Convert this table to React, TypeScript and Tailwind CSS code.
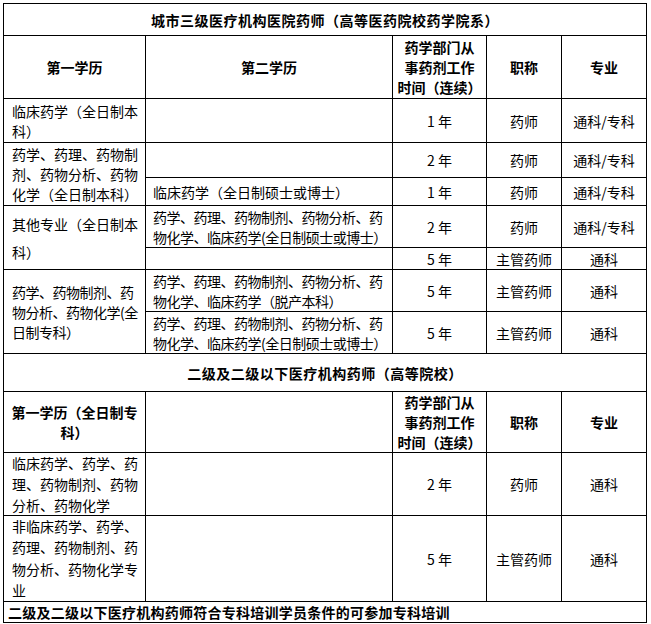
import type { ReactNode } from "react";

const font = { fontFamily: '"Noto Sans CJK SC", "Noto Sans", sans-serif' };

function Cell({
  children,
  className = "",
}: {
  children?: ReactNode;
  className?: string;
}) {
  return (
    <div className={`flex items-center bg-white text-[14px] leading-[20px] text-black ${className}`}>
      {children}
    </div>
  );
}

// centred cell for the short columns (time / title / category)
function Mid({ children, className = "" }: { children?: ReactNode; className?: string }) {
  return <Cell className={`justify-center text-center ${className}`}>{children}</Cell>;
}

function HeaderTime() {
  return (
    <Mid className="font-bold">
      <span className="whitespace-nowrap">
        药学部门从
        <br />
        事药剂工作
        <br />
        时间（连续）
      </span>
    </Mid>
  );
}

export default function App() {
  return (
    <div className="min-h-screen bg-white pl-[3px] pt-[3px]" style={font}>
      <div
        className="grid w-[644px] gap-px bg-black p-px"
        style={{
          gridTemplateColumns: "141px 246px 93px 74px 84px",
          gridTemplateRows: "31px 62px 43px 34px 27px 41px 21px 41px 41px 37px 60px 62px 85px 20px",
        }}
      >
        {/* section 1 */}
        <Mid className="col-span-5 font-bold tracking-[0.5px]">
          城市三级医疗机构医院药师（高等医药院校药学院系）
        </Mid>

        <Mid className="font-bold">第一学历</Mid>
        <Mid className="font-bold">第二学历</Mid>
        <HeaderTime />
        <Mid className="font-bold">职称</Mid>
        <Mid className="font-bold">专业</Mid>

        <Cell className="pl-2 leading-[19px]">
          <span className="whitespace-nowrap">
            临床药学（全日制本
            <br />
            科）
          </span>
        </Cell>
        <Cell />
        <Mid>1 年</Mid>
        <Mid>药师</Mid>
        <Mid>通科/专科</Mid>

        <Cell className="row-span-2 pl-2">
          <span className="whitespace-nowrap">
            药学、药理、药物制
            <br />
            剂、药物分析、药物
            <br />
            化学（全日制本科）
          </span>
        </Cell>
        <Cell />
        <Mid>2 年</Mid>
        <Mid>药师</Mid>
        <Mid>通科/专科</Mid>

        <Cell className="pl-[7px]">
          <span className="whitespace-nowrap">临床药学（全日制硕士或博士）</span>
        </Cell>
        <Mid>1 年</Mid>
        <Mid>药师</Mid>
        <Mid>通科/专科</Mid>

        <Cell className="row-span-2 pl-2 leading-[28px]">
          <span className="whitespace-nowrap">
            其他专业（全日制本
            <br />
            科）
          </span>
        </Cell>
        <Cell className="pl-[7px]">
          <span className="whitespace-nowrap tracking-[-0.5px]">
            药学、药理、药物制剂、药物分析、药
            <br />
            物化学、临床药学(全日制硕士或博士）
          </span>
        </Cell>
        <Mid>2 年</Mid>
        <Mid>药师</Mid>
        <Mid>通科/专科</Mid>

        <Cell />
        <Mid>5 年</Mid>
        <Mid>主管药师</Mid>
        <Mid>通科</Mid>

        <Cell className="row-span-2 pl-2">
          <span className="whitespace-nowrap tracking-[-0.5px]">
            药学、药物制剂、药
            <br />
            物分析、药物化学(全
            <br />
            日制专科）
          </span>
        </Cell>
        <Cell className="pl-[7px]">
          <span className="whitespace-nowrap tracking-[-0.5px]">
            药学、药理、药物制剂、药物分析、药
            <br />
            物化学、临床药学（脱产本科）
          </span>
        </Cell>
        <Mid>5 年</Mid>
        <Mid>主管药师</Mid>
        <Mid>通科</Mid>

        <Cell className="pl-[7px]">
          <span className="whitespace-nowrap tracking-[-0.5px]">
            药学、药理、药物制剂、药物分析、药
            <br />
            物化学、临床药学(全日制硕士或博士）
          </span>
        </Cell>
        <Mid>5 年</Mid>
        <Mid>主管药师</Mid>
        <Mid>通科</Mid>

        {/* section 2 */}
        <Mid className="col-span-5 font-bold tracking-[0.5px]">
          二级及二级以下医疗机构药师（高等院校）
        </Mid>

        <Mid className="font-bold">
          <span className="whitespace-nowrap">
            第一学历（全日制专
            <br />
            科）
          </span>
        </Mid>
        <Cell />
        <HeaderTime />
        <Mid className="font-bold">职称</Mid>
        <Mid className="font-bold">专业</Mid>

        <Cell className="pl-2 leading-[21px]">
          <span className="whitespace-nowrap">
            临床药学、药学、药
            <br />
            理、药物制剂、药物
            <br />
            分析、药物化学
          </span>
        </Cell>
        <Cell />
        <Mid>2 年</Mid>
        <Mid>药师</Mid>
        <Mid>通科</Mid>

        <Cell className="pl-2 leading-[21.5px]">
          <span className="whitespace-nowrap">
            非临床药学、药学、
            <br />
            药理、药物制剂、药
            <br />
            物分析、药物化学专
            <br />
            业
          </span>
        </Cell>
        <Cell />
        <Mid>5 年</Mid>
        <Mid>主管药师</Mid>
        <Mid>通科</Mid>

        <Cell className="col-span-5 pl-1 font-bold tracking-[0.25px]">
          <span className="whitespace-nowrap">
            二级及二级以下医疗机构药师符合专科培训学员条件的可参加专科培训
          </span>
        </Cell>
      </div>
    </div>
  );
}
